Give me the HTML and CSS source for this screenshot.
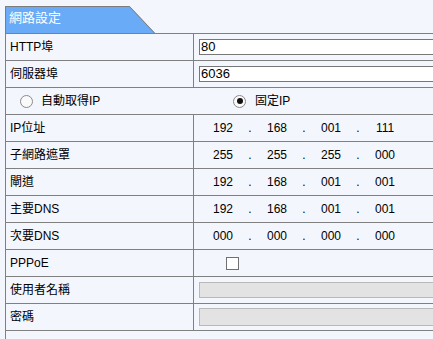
FILE: index.html
```html
<!DOCTYPE html>
<html lang="zh-Hant">
<head>
<meta charset="utf-8">
<title>網路設定</title>
<link rel="stylesheet" href="styles.css">
</head>
<body>
<div class="panel">
  <div class="tab">
    <svg class="tab-shape" width="151" height="27" viewBox="0 0 151 27">
      <polygon points="0,0 124.5,0 150,27 0,27" fill="#6aabf7"/>
      <path d="M0.5,27 V0.5 H124.5 L149.5,27" fill="none" stroke="#7c7c7c" stroke-width="1"/>
    </svg>
    <span class="tab-title">網路設定</span>
  </div>
  <div class="table">
    <div class="row">
      <div class="label">HTTP埠</div>
      <div class="value"><div class="field">80</div></div>
    </div>
    <div class="row">
      <div class="label">伺服器埠</div>
      <div class="value"><div class="field">6036</div></div>
    </div>
    <div class="row span">
      <div class="opt opt-auto"><span class="radio"></span><span>自動取得IP</span></div>
      <div class="opt opt-fixed"><span class="radio checked"></span><span>固定IP</span></div>
    </div>
    <div class="row">
      <div class="label">IP位址</div>
      <div class="value ip"><span class="oct">192</span><span class="dot">.</span><span class="oct">168</span><span class="dot">.</span><span class="oct">001</span><span class="dot">.</span><span class="oct">111</span></div>
    </div>
    <div class="row">
      <div class="label">子網路遮罩</div>
      <div class="value ip"><span class="oct">255</span><span class="dot">.</span><span class="oct">255</span><span class="dot">.</span><span class="oct">255</span><span class="dot">.</span><span class="oct">000</span></div>
    </div>
    <div class="row">
      <div class="label">閘道</div>
      <div class="value ip"><span class="oct">192</span><span class="dot">.</span><span class="oct">168</span><span class="dot">.</span><span class="oct">001</span><span class="dot">.</span><span class="oct">001</span></div>
    </div>
    <div class="row">
      <div class="label">主要DNS</div>
      <div class="value ip"><span class="oct">192</span><span class="dot">.</span><span class="oct">168</span><span class="dot">.</span><span class="oct">001</span><span class="dot">.</span><span class="oct">001</span></div>
    </div>
    <div class="row">
      <div class="label">次要DNS</div>
      <div class="value ip"><span class="oct">000</span><span class="dot">.</span><span class="oct">000</span><span class="dot">.</span><span class="oct">000</span><span class="dot">.</span><span class="oct">000</span></div>
    </div>
    <div class="row">
      <div class="label">PPPoE</div>
      <div class="value check-cell"><span class="checkbox"></span></div>
    </div>
    <div class="row">
      <div class="label">使用者名稱</div>
      <div class="value"><div class="field disabled"></div></div>
    </div>
    <div class="row">
      <div class="label">密碼</div>
      <div class="value"><div class="field disabled tall"></div></div>
    </div>
    <div class="row span last"></div>
  </div>
</div>
</body>
</html>
```

FILE: styles.css
```css
html, body {
  margin: 0;
  padding: 0;
  overflow: hidden;
  background: #f3f6fd;
}

body {
  font-family: "Liberation Sans", "Noto Sans CJK TC", sans-serif;
  font-size: 12px;
  color: #000;
}

.panel {
  margin-left: 5px;
  padding-top: 6px;
  width: 428px;
  overflow: hidden;
}

.tab {
  position: relative;
  width: 151px;
  height: 27px;
}

.tab-shape {
  position: absolute;
  left: 0;
  top: 0;
  display: block;
}

.tab-title {
  position: relative;
  display: block;
  padding: 3px 0 0 4px;
  font-size: 13px;
  line-height: 17px;
  color: #fff;
}

.table {
  border-top: 1px solid #808080;
  border-left: 1px solid #808080;
}

.row {
  display: grid;
  grid-template-columns: 188px 1fr;
  height: 26px;
  border-bottom: 1px solid #808080;
}

.row.span {
  grid-template-columns: 227px 1fr;
}

.row.last {
  height: 8px;
  border-bottom: none;
}

.label {
  box-sizing: border-box;
  border-right: 1px solid #808080;
  padding-left: 4px;
  display: flex;
  align-items: center;
  line-height: 14px;
}

.value {
  display: flex;
  align-items: center;
  padding-left: 5px;
  min-width: 0;
  overflow: hidden;
}

.field {
  box-sizing: border-box;
  flex: 0 0 auto;
  width: 240px;
  height: 16px;
  border: 1px solid #777;
  background: #fff;
  font-size: 13px;
  line-height: 14px;
  padding: 0 1px;
}

.field.disabled {
  background: #e3e3e3;
  border-color: #b9b9b9;
}

.field.tall {
  height: 18px;
}

.ip {
  padding-left: 10px;
  line-height: 14px;
}

.oct {
  width: 38px;
  text-align: center;
}

.dot {
  width: 16px;
  text-align: center;
}

.check-cell {
  padding-left: 32px;
}

.checkbox {
  box-sizing: border-box;
  width: 13px;
  height: 13px;
  border: 1px solid #707070;
  background: #fff;
}

.opt {
  display: flex;
  align-items: center;
  gap: 8px;
  line-height: 14px;
}

.opt-auto {
  padding-left: 14px;
}

.opt-fixed {
  gap: 9px;
}

.radio {
  box-sizing: border-box;
  width: 13px;
  height: 13px;
  border: 1px solid #8a8a8a;
  border-radius: 50%;
  background: #fafafa;
  display: flex;
  align-items: center;
  justify-content: center;
}

.radio.checked::after {
  content: "";
  width: 6px;
  height: 6px;
  border-radius: 50%;
  background: #111;
}
```
